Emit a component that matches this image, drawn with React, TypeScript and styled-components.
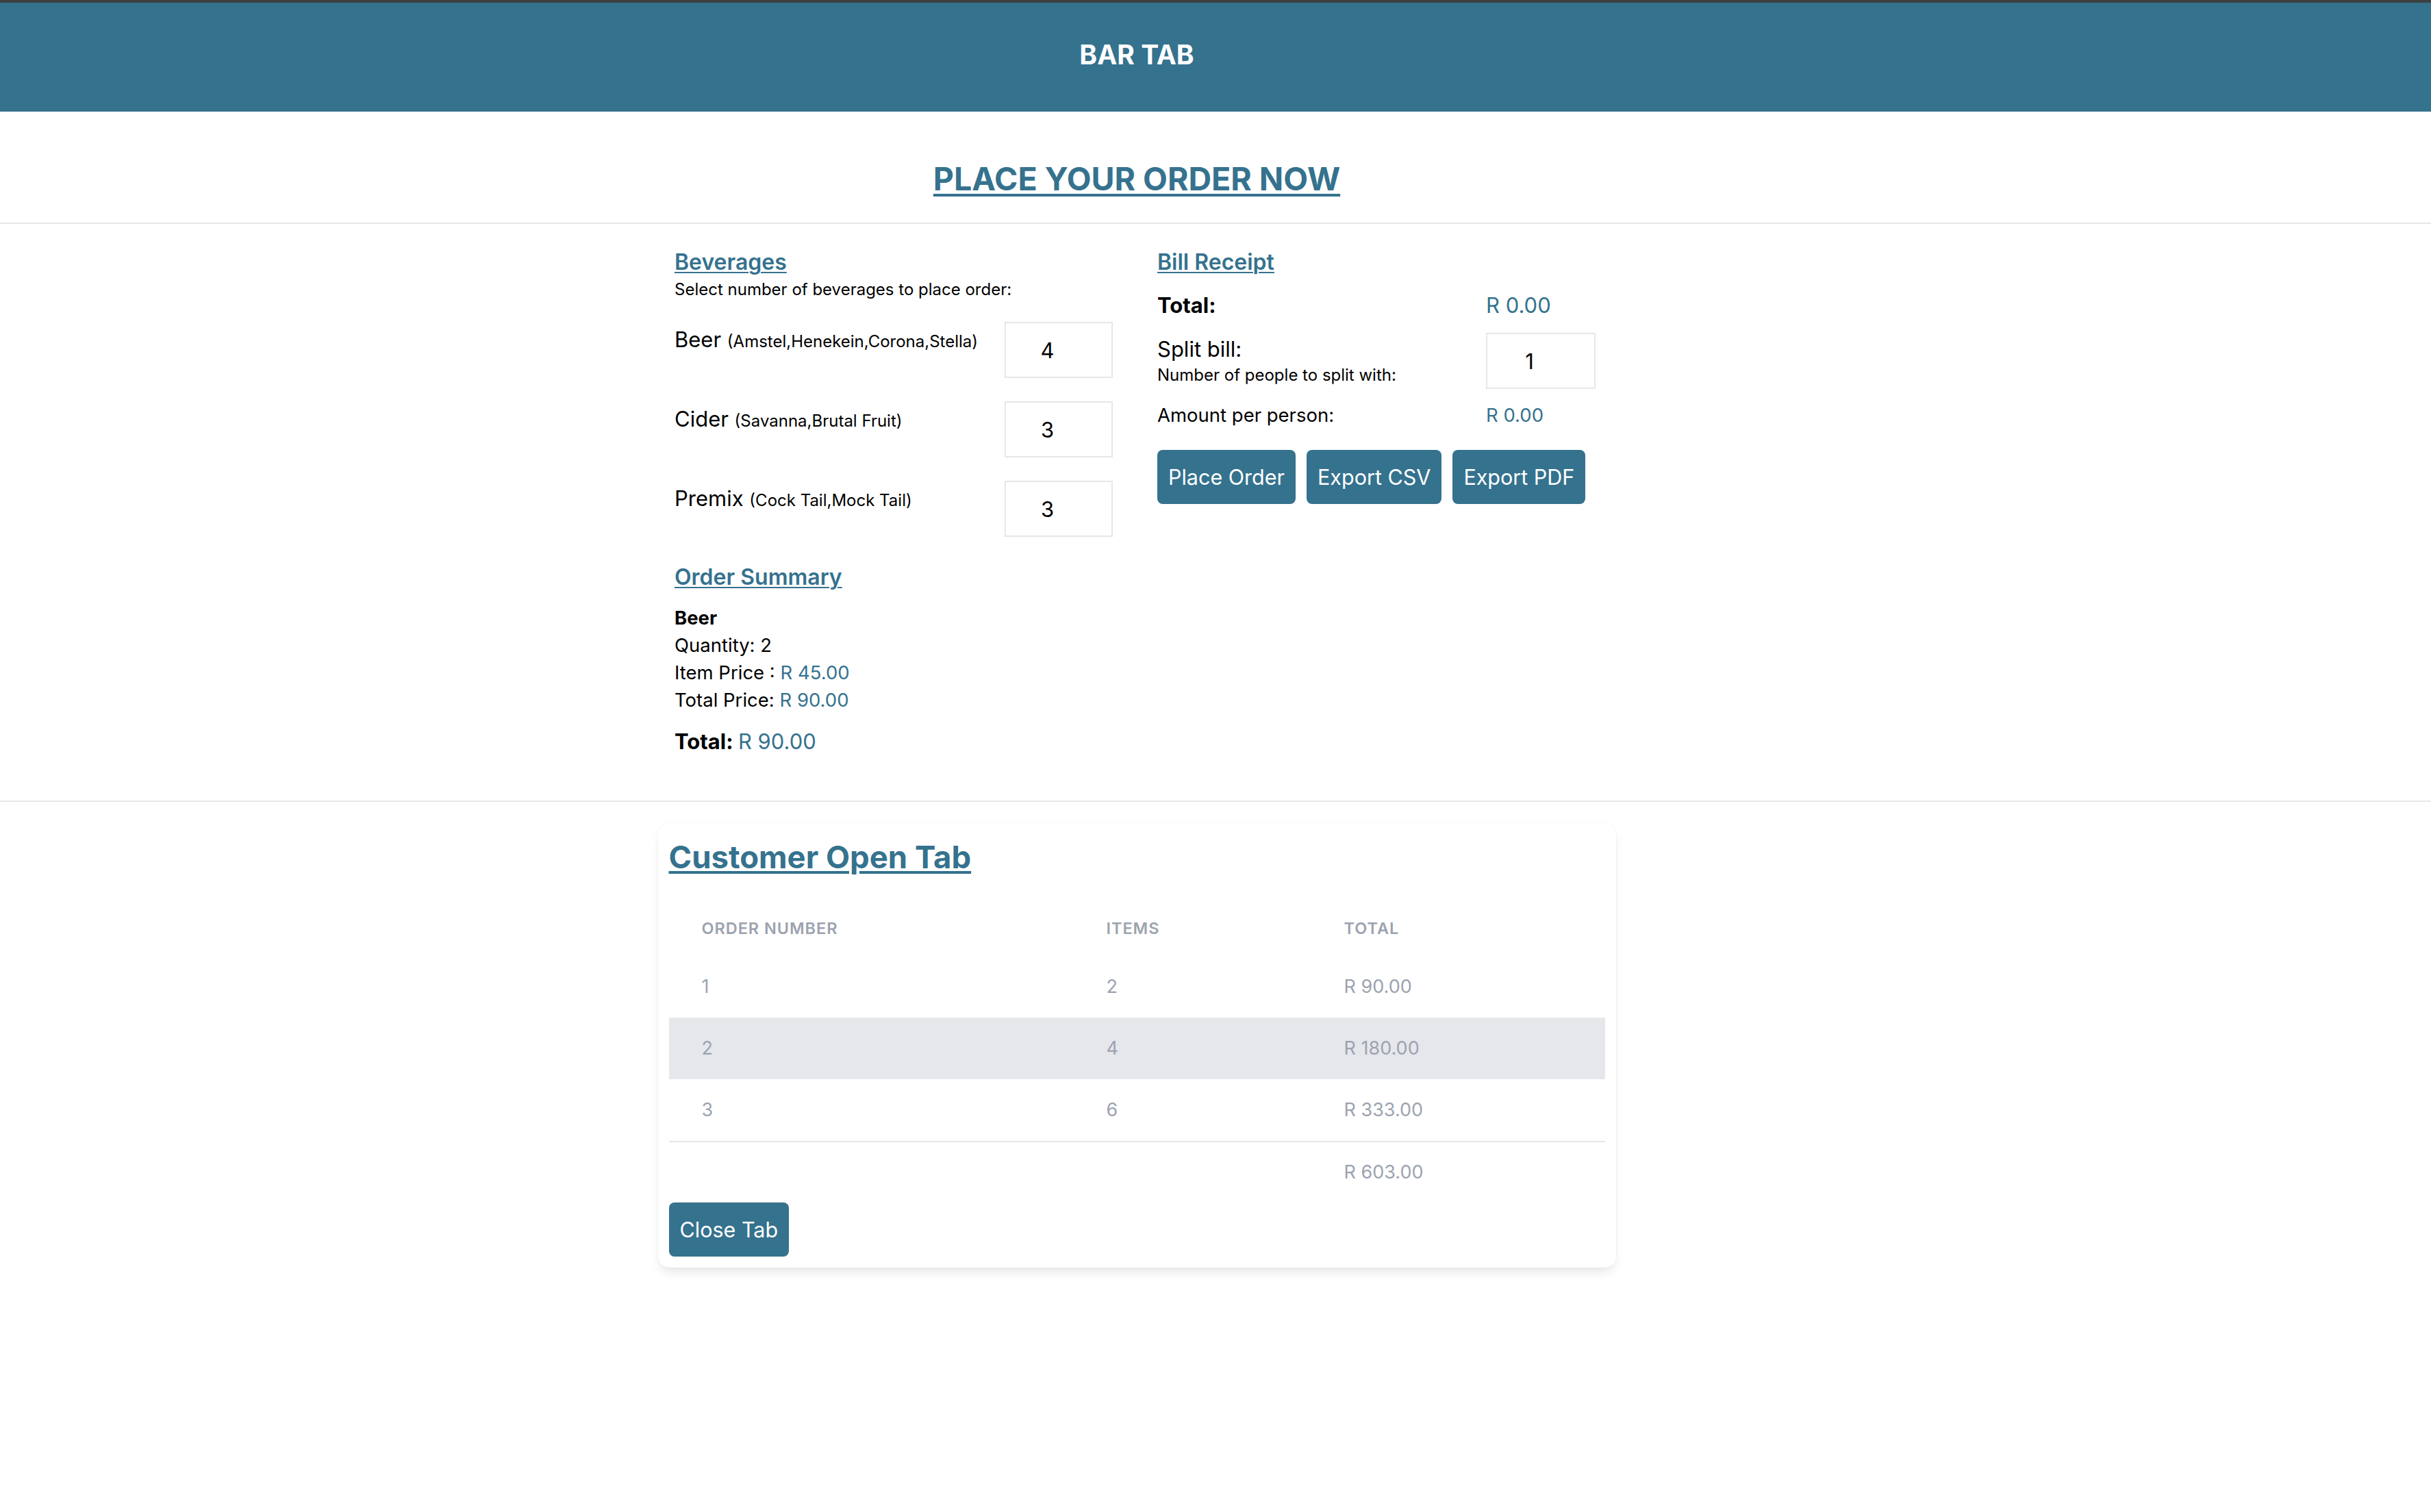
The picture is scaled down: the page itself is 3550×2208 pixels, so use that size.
import styled, { createGlobalStyle } from "styled-components";

const teal = "#35728e";
const line = "#e5e7eb";

const GlobalStyle = createGlobalStyle`
  * { box-sizing: border-box; }
  html, body {
    margin: 0;
    padding: 0;
    background: #ffffff;
  }
  body {
    width: 3550px;
    min-height: 2208px;
    font-family: Inter, "Noto Sans", sans-serif;
    color: #000000;
  }
`;

const Header = styled.header`
  height: 163px;
  border-top: 4px solid #3d4043;
  background: ${teal};
`;

const HeaderInner = styled.div`
  width: 3320px;
  height: 100%;
  display: flex;
  align-items: center;
  justify-content: center;
  padding-bottom: 7px;
`;

const HeaderTitle = styled.h1`
  margin: 0;
  color: #ffffff;
  font-size: 39px;
  font-weight: 700;
  line-height: 48px;
`;

const TitleBar = styled.section`
  border-bottom: 2px solid ${line};
`;

const TitleInner = styled.div`
  width: 3320px;
  padding: 69px 0 35px;
  text-align: center;
`;

const PageTitle = styled.h2`
  margin: 0;
  color: ${teal};
  font-size: 46.5px;
  font-weight: 700;
  line-height: 58px;
  text-decoration: underline;
  text-decoration-thickness: 4px;
  text-underline-offset: 5px;
`;

const OrderSection = styled.section`
  border-bottom: 2px solid ${line};
`;

const OrderGrid = styled.div`
  width: 3316px;
  display: grid;
  grid-template-columns: 641px 641px;
  column-gap: 64px;
  justify-content: center;
  align-items: start;
  padding: 32px 0 62px;
`;

const Column = styled.div`
  display: flex;
  flex-direction: column;
`;

const SectionHeading = styled.h3<{ $gap?: number }>`
  margin: ${(p) => p.$gap ?? 0}px 0 0;
  color: ${teal};
  font-size: 32px;
  font-weight: 600;
  line-height: 48px;
  text-decoration: underline;
  text-decoration-thickness: 2px;
  text-underline-offset: 3px;
`;

const Hint = styled.p`
  margin: 2px 0 0;
  font-size: 24px;
  line-height: 28px;
`;

const BeverageList = styled.div`
  display: flex;
  flex-direction: column;
  gap: 34px;
  margin-top: 33px;
`;

const BeverageRow = styled.div`
  display: grid;
  grid-template-columns: 482px 158px;
  align-items: start;
  height: 82px;
`;

const ItemLabel = styled.label`
  padding-top: 2px;
  font-size: 31px;
  line-height: 48px;
`;

const ItemBrands = styled.span`
  font-size: 24px;
`;

const QtyInput = styled.input`
  width: ${(p) => (p.size ? p.size : 158)}px;
  height: 82px;
  padding: 0 33px 0 0;
  border: 2px solid ${line};
  border-radius: 0;
  background: #ffffff;
  font-family: inherit;
  font-size: 31px;
  color: #000000;
  text-align: center;
  outline: none;
`;

const SummaryList = styled.div`
  display: flex;
  flex-direction: column;
  margin-top: 15px;
`;

const SummaryLine = styled.div<{ $bold?: boolean }>`
  font-size: 27.5px;
  line-height: 40px;
  font-weight: ${(p) => (p.$bold ? 700 : 400)};
`;

const Money = styled.span`
  color: ${teal};
  font-weight: 400;
`;

const GrandTotal = styled.div`
  margin-top: 17px;
  font-size: 31px;
  line-height: 48px;
  font-weight: 700;
`;

const ReceiptRow = styled.div<{ $top: number }>`
  display: grid;
  grid-template-columns: 480px 160px;
  align-items: start;
  margin-top: ${(p) => p.$top}px;
`;

const ReceiptLabel = styled.div<{ $bold?: boolean; $small?: boolean }>`
  font-size: ${(p) => (p.$small ? 27.5 : 31)}px;
  line-height: ${(p) => (p.$small ? 40 : 48)}px;
  font-weight: ${(p) => (p.$bold ? 700 : 400)};
`;

const ReceiptValue = styled.div<{ $small?: boolean }>`
  color: ${teal};
  font-size: ${(p) => (p.$small ? 27.5 : 31)}px;
  line-height: ${(p) => (p.$small ? 40 : 48)}px;
`;

const SplitHint = styled.div`
  font-size: 24px;
  line-height: 28px;
`;

const ButtonRow = styled.div`
  display: flex;
  gap: 16px;
  margin-top: 31px;
`;

const Button = styled.button`
  border: none;
  border-radius: 8px;
  background: ${teal};
  color: #ffffff;
  font-family: inherit;
  font-size: 30.5px;
  line-height: 48px;
  padding: 16px 16px 15px;
  cursor: pointer;
`;

const TabArea = styled.div`
  width: 3320px;
  display: flex;
  justify-content: center;
  padding-top: 31px;
`;

const TabCard = styled.div`
  width: 1399px;
  padding: 21px 16px 16px;
  border-radius: 16px;
  background: #ffffff;
  box-shadow: 0 10px 16px -4px rgba(0, 0, 0, 0.1), 0 0 3px rgba(0, 0, 0, 0.06);
`;

const TabHeading = styled.h2`
  margin: 0 0 34px;
  color: ${teal};
  font-size: 45.5px;
  font-weight: 700;
  line-height: 58px;
  text-decoration: underline;
  text-decoration-thickness: 4px;
  text-underline-offset: 4px;
`;

const Table = styled.table`
  width: 100%;
  border-collapse: collapse;
  table-layout: fixed;
`;

const Th = styled.th`
  padding: 25px 48px 24px;
  text-align: left;
  font-size: 23.5px;
  line-height: 32px;
  font-weight: 600;
  letter-spacing: 0.04em;
  text-transform: uppercase;
  color: #9ca3af;
`;

const Tr = styled.tr<{ $striped?: boolean }>`
  background: ${(p) => (p.$striped ? line : "transparent")};
`;

const Td = styled.td`
  padding: 25px 48px;
  font-size: 27px;
  line-height: 40px;
  color: #9ca3af;
`;

const FootRow = styled.tr`
  border-top: 2px solid ${line};
`;

const FootCell = styled.td`
  padding: 24px 48px;
  font-size: 27px;
  line-height: 40px;
  color: #9ca3af;
`;

const beverages = [
  { name: "Beer", brands: "(Amstel,Henekein,Corona,Stella)", qty: 4 },
  { name: "Cider", brands: "(Savanna,Brutal Fruit)", qty: 3 },
  { name: "Premix", brands: "(Cock Tail,Mock Tail)", qty: 3 },
];

const tabs = [
  { order: 1, items: 2, total: "R 90.00" },
  { order: 2, items: 4, total: "R 180.00" },
  { order: 3, items: 6, total: "R 333.00" },
];

export default function App() {
  return (
    <>
      <GlobalStyle />
      <Header>
        <HeaderInner>
          <HeaderTitle>BAR TAB</HeaderTitle>
        </HeaderInner>
      </Header>

      <TitleBar>
        <TitleInner>
          <PageTitle>PLACE YOUR ORDER NOW</PageTitle>
        </TitleInner>
      </TitleBar>

      <OrderSection>
        <OrderGrid>
          <Column>
            <SectionHeading>Beverages</SectionHeading>
            <Hint>Select number of beverages to place order:</Hint>
            <BeverageList>
              {beverages.map((b) => (
                <BeverageRow key={b.name}>
                  <ItemLabel>
                    {b.name} <ItemBrands>{b.brands}</ItemBrands>
                  </ItemLabel>
                  <QtyInput type="text" readOnly value={b.qty} />
                </BeverageRow>
              ))}
            </BeverageList>

            <SectionHeading $gap={35}>Order Summary</SectionHeading>
            <SummaryList>
              <SummaryLine $bold>Beer</SummaryLine>
              <SummaryLine>Quantity: 2</SummaryLine>
              <SummaryLine>
                Item Price : <Money>R 45.00</Money>
              </SummaryLine>
              <SummaryLine>
                Total Price: <Money>R 90.00</Money>
              </SummaryLine>
            </SummaryList>
            <GrandTotal>
              Total: <Money>R 90.00</Money>
            </GrandTotal>
          </Column>

          <Column>
            <SectionHeading>Bill Receipt</SectionHeading>
            <ReceiptRow $top={15}>
              <ReceiptLabel $bold>Total:</ReceiptLabel>
              <ReceiptValue>R 0.00</ReceiptValue>
            </ReceiptRow>
            <ReceiptRow $top={16}>
              <div>
                <ReceiptLabel>Split bill:</ReceiptLabel>
                <SplitHint>Number of people to split with:</SplitHint>
              </div>
              <QtyInput type="text" readOnly value={1} size={160} />
            </ReceiptRow>
            <ReceiptRow $top={18}>
              <ReceiptLabel $small>Amount per person:</ReceiptLabel>
              <ReceiptValue $small>R 0.00</ReceiptValue>
            </ReceiptRow>
            <ButtonRow>
              <Button>Place Order</Button>
              <Button>Export CSV</Button>
              <Button>Export PDF</Button>
            </ButtonRow>
          </Column>
        </OrderGrid>
      </OrderSection>

      <TabArea>
        <TabCard>
          <TabHeading>Customer Open Tab</TabHeading>
          <Table>
            <colgroup>
              <col style={{ width: 591 }} />
              <col style={{ width: 347 }} />
              <col />
            </colgroup>
            <thead>
              <tr>
                <Th>Order Number</Th>
                <Th>Items</Th>
                <Th>Total</Th>
              </tr>
            </thead>
            <tbody>
              {tabs.map((t, i) => (
                <Tr key={t.order} $striped={i % 2 === 1}>
                  <Td>{t.order}</Td>
                  <Td>{t.items}</Td>
                  <Td>{t.total}</Td>
                </Tr>
              ))}
            </tbody>
            <tfoot>
              <FootRow>
                <FootCell />
                <FootCell />
                <FootCell>R 603.00</FootCell>
              </FootRow>
            </tfoot>
          </Table>
          <Button>Close Tab</Button>
        </TabCard>
      </TabArea>
    </>
  );
}
